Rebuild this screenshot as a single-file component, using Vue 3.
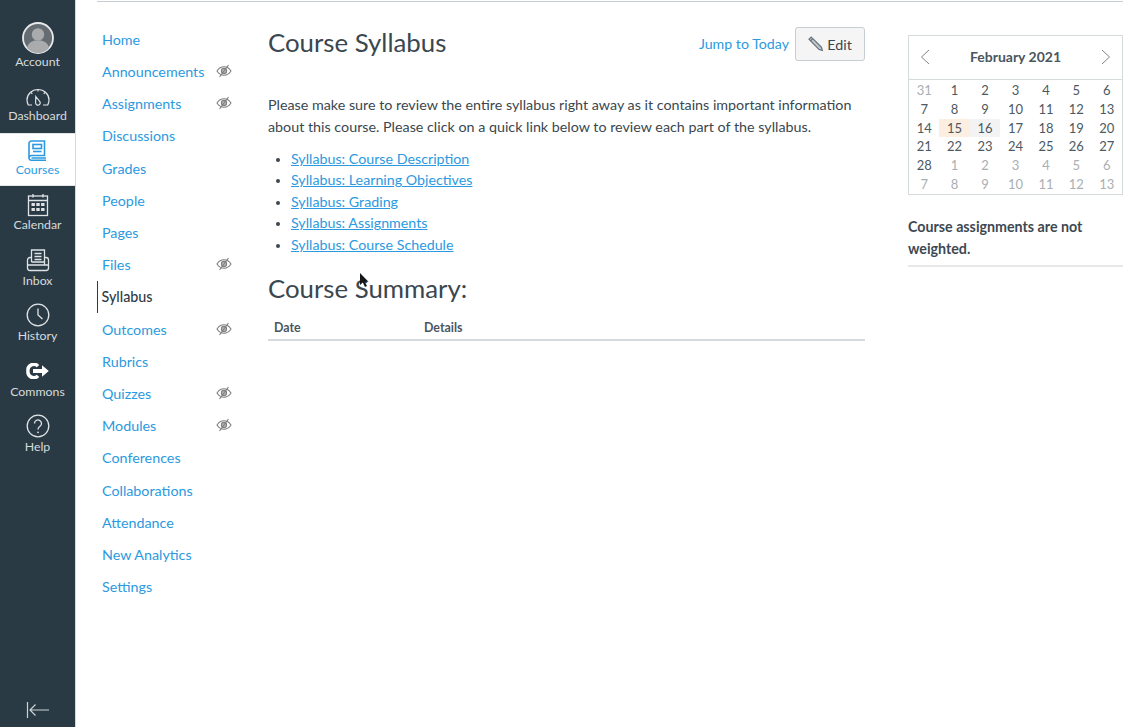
<script setup>
const navItems = [
  { label: 'Home' },
  { label: 'Announcements', hidden: true },
  { label: 'Assignments', hidden: true },
  { label: 'Discussions' },
  { label: 'Grades' },
  { label: 'People' },
  { label: 'Pages' },
  { label: 'Files', hidden: true },
  { label: 'Syllabus', active: true },
  { label: 'Outcomes', hidden: true },
  { label: 'Rubrics' },
  { label: 'Quizzes', hidden: true },
  { label: 'Modules', hidden: true },
  { label: 'Conferences' },
  { label: 'Collaborations' },
  { label: 'Attendance' },
  { label: 'New Analytics' },
  { label: 'Settings' }
]
const links = [
  'Syllabus: Course Description',
  'Syllabus: Learning Objectives',
  'Syllabus: Grading',
  'Syllabus: Assignments',
  'Syllabus: Course Schedule'
]
const days = [
  [31, 1], [1], [2], [3], [4], [5], [6],
  [7], [8], [9], [10], [11], [12], [13],
  [14], [15, 0, 'today'], [16, 0, 'sel'], [17], [18], [19], [20],
  [21], [22], [23], [24], [25], [26], [27],
  [28], [1, 1], [2, 1], [3, 1], [4, 1], [5, 1], [6, 1],
  [7, 1], [8, 1], [9, 1], [10, 1], [11, 1], [12, 1], [13, 1]
].map(([n, other, kind], i) => ({ id: i, n, other: !!other, kind: kind || '' }))
</script>

<template>
  <div class="page">
    <aside class="rail">
      <a class="rail-item account">
        <svg class="ic" width="32" height="32" viewBox="0 0 32 32">
          <circle cx="16" cy="16" r="15" fill="#666d72" stroke="#e8eaec" stroke-width="1.800" />
          <circle cx="16" cy="12.500" r="6.200" fill="#a9abad" />
          <path d="M5 26c1-5 4.500-6.500 7.500-7.500h7c3 1 6.500 2.500 7.500 7.500a14.500 14.500 0 0 1-22 0z" fill="#a9abad" />
        </svg>
        <span>Account</span>
      </a>
      <a class="rail-item dash">
        <svg class="ic" width="24" height="18" viewBox="0 0 24 18" fill="none" stroke="#dfe3e6" stroke-width="1.200">
          <path d="M6 17H2.300A10.500 10.500 0 0 1 1 12C1 6 6 1.500 12 1.500S23 6 23 12c0 1.800-.5 3.500-1.300 5H17" />
          <path d="M9.800 8.500l3.700 4.700a2.300 2.300 0 1 1-3.900 1.600z" />
          <path d="M12 1.500v2M5 4.500l1.300 1.300M19 4.500l-1.300 1.300" />
        </svg>
        <span>Dashboard</span>
      </a>
      <a class="rail-item current">
        <svg class="ic" width="19" height="21" viewBox="0 0 19 21" fill="none" stroke="#2b9ae0" stroke-width="1.600">
          <path d="M3.500 1h13v14.500h-13A2.500 2.500 0 0 0 1 18V3.500A2.500 2.500 0 0 1 3.500 1z" />
          <path d="M1 18a2.300 2.300 0 0 0 2.500 2.200H18M3.500 18H18" />
          <rect x="5" y="4.500" width="8.500" height="4" />
          <path d="M5 11.500h8.500" />
        </svg>
        <span>Courses</span>
      </a>
      <a class="rail-item cal-item">
        <svg class="ic" width="22" height="24" viewBox="0 0 22 24" fill="none" stroke="#dfe3e6" stroke-width="1.300">
          <rect x="1.500" y="3" width="19" height="19.500" />
          <path d="M1.500 7.500h19M6 1v3.500M16 1v3.500" />
          <g fill="#dfe3e6" stroke="none">
            <rect x="4.500" y="10" width="3.400" height="3" /><rect x="9.300" y="10" width="3.400" height="3" /><rect x="14.100" y="10" width="3.400" height="3" />
            <rect x="4.500" y="15" width="3.400" height="3" /><rect x="9.300" y="15" width="3.400" height="3" /><rect x="14.100" y="15" width="3.400" height="3" />
          </g>
        </svg>
        <span>Calendar</span>
      </a>
      <a class="rail-item inbox">
        <svg class="ic" width="24" height="24" viewBox="0 0 24 24" fill="none" stroke="#dfe3e6" stroke-width="1.300">
          <path d="M5.500 14V2h13v12" />
          <path d="M8.500 5.500h7M8.500 8.500h7M8.500 11.500h7" />
          <path d="M5.500 9.500H4A2.500 2.500 0 0 0 1.500 12v8A2.500 2.500 0 0 0 4 22.500h16a2.500 2.500 0 0 0 2.500-2.500v-8A2.500 2.500 0 0 0 20 9.500h-1.500" />
          <path d="M1.500 17h21M5.500 14h13v3" />
        </svg>
        <span>Inbox</span>
      </a>
      <a class="rail-item hist">
        <svg class="ic" width="24" height="24" viewBox="0 0 24 24" fill="none" stroke="#dfe3e6" stroke-width="1.300">
          <circle cx="12" cy="12" r="10.800" />
          <path d="M12 5.500V12l4.500 4" />
        </svg>
        <span>History</span>
      </a>
      <a class="rail-item commons">
        <svg class="ic" width="24" height="16" viewBox="0 0 24 16">
          <path d="M12 3.200A5.800 5.800 0 0 0 2 8a5.800 5.800 0 0 0 10 4.800" fill="none" stroke="#fff" stroke-width="3.400" />
          <path d="M7 6h9V2.200L22.800 8 16 13.800V10H7z" fill="#fff" />
        </svg>
        <span>Commons</span>
      </a>
      <a class="rail-item help">
        <svg class="ic" width="24" height="24" viewBox="0 0 24 24" fill="none" stroke="#dfe3e6" stroke-width="1.300">
          <circle cx="12" cy="12" r="10.800" />
          <path d="M8.500 9.500a3.500 3.500 0 1 1 5.500 2.800c-1.300.9-2 1.600-2 3.200" />
          <circle cx="12" cy="18.300" r=".9" fill="#dfe3e6" stroke="none" />
        </svg>
        <span>Help</span>
      </a>
      <a class="collapse">
        <svg width="24" height="16" viewBox="0 0 24 16" fill="none" stroke="#ccd2d6" stroke-width="1.200">
          <path d="M1.500 0v16M23 8H4M9.500 2.500 4 8l5.500 5.500" />
        </svg>
      </a>
    </aside>

    <div class="wrap">
      <nav class="course-nav">
        <a v-for="item in navItems" :key="item.label" class="nav-link" :class="{ active: item.active }">
          <span>{{ item.label }}</span>
          <svg v-if="item.hidden" class="eye" width="16" height="14" viewBox="0 0 16 14" fill="none" stroke="#7d7f80" stroke-width="1.100">
            <path d="M1 7c1.800-2.800 4.200-4.200 7-4.200S13.200 4.200 15 7c-1.800 2.800-4.200 4.200-7 4.200S2.800 9.800 1 7z" />
            <circle cx="8" cy="7" r="2.600" fill="#b4b6b7" />
            <path d="M12.500 1 3.500 13" />
          </svg>
        </a>
      </nav>

      <main class="main">
        <header class="head">
          <h1>Course Syllabus</h1>
          <div class="actions">
            <a class="jump">Jump to Today</a>
            <button class="edit">
              <svg width="16" height="16" viewBox="0 0 15 15" fill="none" stroke="#6b7780" stroke-width="1.200">
                <path d="M1 3 3 1l9.500 9.500.9 3-3-.9z" fill="#c9cdd0" />
                <path d="M2.500 4.500l2-2" />
              </svg>
              Edit
            </button>
          </div>
        </header>
        <p class="intro">Please make sure to review the entire syllabus right away as it contains important information about this course. Please click on a quick link below to review each part of the syllabus.</p>
        <ul class="links">
          <li v-for="l in links" :key="l"><a>{{ l }}</a></li>
        </ul>
        <h2>Course Summary:</h2>
        <div class="sum-head">
          <span class="date">Date</span>
          <span>Details</span>
        </div>
      </main>

      <aside class="side">
        <div class="cal">
          <div class="cal-head">
            <svg width="10" height="16" viewBox="0 0 10 16" fill="none" stroke="#7b858c" stroke-width="1"><path d="M9 1 1.500 8 9 15" /></svg>
            <strong>February 2021</strong>
            <svg width="10" height="16" viewBox="0 0 10 16" fill="none" stroke="#7b858c" stroke-width="1"><path d="M1 1l7.500 7L1 15" /></svg>
          </div>
          <div class="cal-grid">
            <span v-for="d in days" :key="d.id" class="day" :class="[d.kind, { other: d.other }]">{{ d.n }}</span>
          </div>
        </div>
        <p class="weight">Course assignments are not weighted.</p>
      </aside>
    </div>

    <svg class="cursor" width="10" height="15" viewBox="0 0 10 15">
      <path d="M1 0v12l2.800-2.500L6 14l2-1-2.200-4.300H9.500z" fill="#15181a" />
    </svg>
  </div>
</template>

<style scoped>
.page {
  position: relative;
  display: flex;
  width: 1127px;
  height: 727px;
  overflow: hidden;
  background: #fff;
  font-family: Lato, "Open Sans", sans-serif;
  color: #3a4750;
}
.rail {
  width: 75px;
  flex: none;
  display: flex;
  flex-direction: column;
  padding-top: 22px;
  box-sizing: content-box;
  height: 705px;
  background: #2a3a45;
  border-right: 1px solid #d5d9dc;
}
.rail-item {
  display: flex;
  flex-direction: column;
  align-items: center;
  color: #d6dbde;
  font-size: 12.300px;
  line-height: 14px;
  box-sizing: border-box;
}
.ic { flex: none; display: block; }
.account { height: 48px; }
.account .ic { margin-bottom: 1px; }
.dash { height: 63px; padding-top: 18px; }
.dash .ic { margin-bottom: 3px; }
.current {
  height: 53px;
  padding-top: 6px;
  background: #fff;
  color: #2b9ae0;
  border-top: 1px solid #e3e5e7;
  border-bottom: 1px solid #e3e5e7;
}
.current .ic { margin-bottom: 2px; }
.cal-item { height: 54px; padding-top: 7px; }
.cal-item .ic { margin-bottom: 1px; }
.inbox { height: 56px; padding-top: 8px; }
.inbox .ic { margin-bottom: 2px; }
.hist { height: 55px; padding-top: 7px; }
.hist .ic { margin-bottom: 2px; }
.commons { height: 56px; padding-top: 12px; }
.commons .ic { margin-bottom: 6px; }
.help { height: 55px; padding-top: 7px; }
.help .ic { margin-bottom: 2px; }
.collapse {
  margin-top: auto;
  height: 25px;
  padding-left: 26px;
  display: block;
}
.wrap {
  flex: none;
  width: 1026px;
  margin: 1px 0 0 21px;
  height: max-content;
  border-top: 1px solid #c7cdd1;
  display: flex;
}
.course-nav {
  width: 171px;
  flex: none;
  padding-top: 21.300px;
  display: flex;
  flex-direction: column;
}
.nav-link {
  height: 32.200px;
  display: flex;
  align-items: center;
  justify-content: space-between;
  padding: 0 36px 0 5px;
  box-sizing: border-box;
  font-size: 14.300px;
  color: #2b9ae0;
}
.nav-link.active {
  color: #2d3b45;
  font-weight: 500;
  border-left: 1.500px solid #2d3b45;
  padding-left: 3.500px;
}
.eye { margin-top: -1px; }
.main {
  width: 597px;
  flex: none;
}
.head {
  display: flex;
  justify-content: space-between;
  padding-top: 25px;
  height: 61px;
  box-sizing: border-box;
}
h1 {
  margin: -1px 0 0;
  font-size: 25.800px;
  font-weight: 400;
  line-height: 32px;
}
.actions { display: flex; align-items: center; gap: 6px; height: 34px; }
.jump { color: #2b9ae0; font-size: 14.200px; margin-top: -2px; }
.edit {
  width: 70px;
  height: 34px;
  display: flex;
  align-items: center;
  justify-content: center;
  gap: 3px;
  padding: 0;
  background: #f5f5f5;
  border: 1px solid #c7cdd1;
  border-radius: 3px;
  color: #3a4750;
  font: 14.300px Lato, sans-serif;
}
.intro {
  margin: 31px 0 0;
  font-size: 14.300px;
  line-height: 22px;
}
.links {
  margin: 10px 0 0;
  padding: 0 0 0 23px;
  font-size: 14.250px;
  line-height: 21.400px;
}
.links li::marker { font-size: 12px; }
.links a { color: #2b9ae0; text-decoration: underline; }
h2 {
  margin: 17px 0 0;
  font-size: 25.800px;
  font-weight: 400;
  line-height: 32px;
}
.sum-head {
  margin-top: 12px;
  display: flex;
  height: 25px;
  padding-left: 6px;
  align-items: center;
  font-size: 12.400px;
  font-weight: 700;
  color: #4a5660;
  border-bottom: 2px solid #d7dadd;
  box-sizing: border-box;
}
.date { width: 150px; }
.side {
  width: 215px;
  flex: none;
  margin-left: 43px;
  padding-top: 33px;
}
.cal {
  border: 1px solid #d5dadd;
}
.cal-head {
  height: 44px;
  display: flex;
  align-items: center;
  justify-content: space-between;
  padding: 0 11px 2px;
  border-bottom: 1px solid #d5dadd;
  box-sizing: border-box;
  font-size: 14px;
  color: #4a5660;
}
.cal-grid {
  display: grid;
  grid-template-columns: repeat(7, 1fr);
  grid-auto-rows: 18.800px;
  padding: 1px 0 0;
  height: 114px;
  box-sizing: border-box;
}
.day {
  text-align: center;
  font-size: 13px;
  line-height: 18.800px;
  color: #4d5962;
}
.day:first-child, .day.other { color: #a9afb3; }
.day.today { background: #fdeee2; }
.day.sel { background: #f3f3f3; }
.weight {
  margin: 21px 0 0;
  padding-bottom: 5px;
  font-size: 14.250px;
  line-height: 22px;
  font-weight: 700;
  color: #3d4952;
  border-bottom: 2px solid #e6e8ea;
}
.cursor {
  position: absolute;
  left: 359px;
  top: 273px;
}
</style>

<style>
html, body { margin: 0; background: #fff; }
</style>
